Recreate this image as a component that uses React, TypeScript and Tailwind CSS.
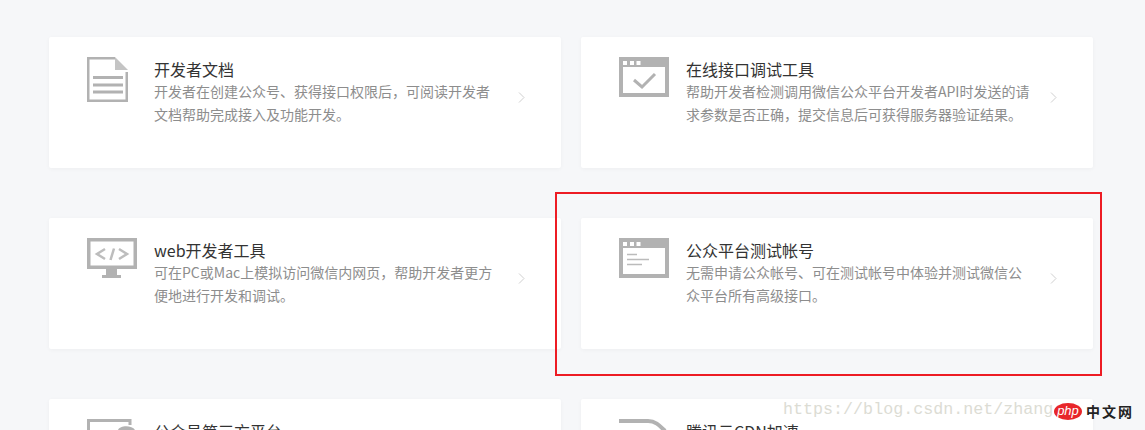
import React from 'react';

const DocIcon = () => (
  <svg width="41" height="45" viewBox="0 0 41 45" className="block">
    <path d="M0 0H28V2.500H2.500V42.500H38.500V15H41V45H0Z" fill="#b2b2b2" />
    <path d="M28 0L41 13H28Z" fill="#c4c4c4" />
    <path d="M6 19H36V22H6ZM6 26.500H36V29.500H6ZM6 33.500H36V36.500H6Z" fill="#b2b2b2" />
  </svg>
);

const WindowFrame = ({ children }: { children: React.ReactNode }) => (
  <svg width="50" height="40" viewBox="0 0 50 40" className="block">
    <path fillRule="evenodd" d="M0 0H50V40H0ZM4 10V36H46V10Z" fill="#b2b2b2" />
    <rect x="4" y="4" width="4" height="4" fill="#fff" />
    <rect x="11" y="4" width="4" height="4" fill="#fff" />
    <rect x="17.500" y="4" width="4" height="4" fill="#fff" />
    {children}
  </svg>
);

const CheckWindowIcon = () => (
  <WindowFrame>
    <path d="M15 23L23 30L36 17" fill="none" stroke="#b2b2b2" strokeWidth="3" />
  </WindowFrame>
);

const TextWindowIcon = () => (
  <WindowFrame>
    <path d="M8 16.500H18M8 21.500H30M8 26.500H23" fill="none" stroke="#bbbbbb" strokeWidth="1.500" />
  </WindowFrame>
);

const MonitorIcon = () => (
  <svg width="50" height="41" viewBox="0 0 50 41" className="block">
    <path fillRule="evenodd" d="M0 0H50V31H0ZM3.500 3.500V27.500H46.500V3.500Z" fill="#b2b2b2" />
    <path d="M19 31H30V37H19ZM15 37H34V40H15Z" fill="#b2b2b2" />
    <path d="M18 11L10 16L18 21M32 11L40 16L32 21M27 10.500L23.500 22" fill="none" stroke="#bdbdbd" strokeWidth="2.500" />
  </svg>
);

const PlatformIcon = () => (
  <svg width="48" height="11" viewBox="0 0 48 11" className="block">
    <path d="M1.500 11V1.500H43V6" fill="none" stroke="#b2b2b2" strokeWidth="3" />
    <path d="M31 11C33 6 45 6 48 11Z" fill="#b2b2b2" />
  </svg>
);

const CloudIcon = () => (
  <svg width="48" height="12" viewBox="0 0 48 12" className="block">
    <path d="M0 2H29C37 2 41 7 46 12" fill="none" stroke="#b2b2b2" strokeWidth="4" />
  </svg>
);

const Chevron = () => (
  <svg width="7" height="11" viewBox="0 0 7 11" className="block mt-[35px] ml-[18px] shrink-0">
    <path d="M1 0.500L6 5.500L1 10.500" fill="none" stroke="#cfcfcf" strokeWidth="1" />
  </svg>
);

interface CardProps {
  icon: React.ReactNode;
  title: string;
  desc?: string;
}

const Card = ({ icon, title, desc }: CardProps) => (
  <div className="h-[131px] bg-white rounded-[2px] shadow-[0_1px_4px_rgba(0,0,0,0.04)] pl-[38px] pt-5 flex">
    <div className="w-[67px] shrink-0">{icon}</div>
    <div className="w-[346px] shrink-0">
      <h3 className="text-base leading-[24px] font-normal text-[#333]">{title}</h3>
      {desc && <p className="text-sm leading-[23px] text-[#8d8d8d] -mt-[1px]">{desc}</p>}
    </div>
    {desc && <Chevron />}
  </div>
);

export default function App() {
  return (
    <div
      className="relative h-[430px] w-[1145px] overflow-hidden bg-[#f6f7f9] pt-[37px] pl-[49px]"
      style={{ fontFamily: '"Noto Sans CJK SC", "Noto Sans", sans-serif' }}
    >
      <div className="grid grid-cols-[512px_512px] gap-x-5 gap-y-[50px]">
        <Card
          icon={<DocIcon />}
          title="开发者文档"
          desc="开发者在创建公众号、获得接口权限后，可阅读开发者文档帮助完成接入及功能开发。"
        />
        <Card
          icon={<CheckWindowIcon />}
          title="在线接口调试工具"
          desc="帮助开发者检测调用微信公众平台开发者API时发送的请求参数是否正确，提交信息后可获得服务器验证结果。"
        />
        <Card
          icon={<MonitorIcon />}
          title="web开发者工具"
          desc="可在PC或Mac上模拟访问微信内网页，帮助开发者更方便地进行开发和调试。"
        />
        <Card
          icon={<TextWindowIcon />}
          title="公众平台测试帐号"
          desc="无需申请公众帐号、可在测试帐号中体验并测试微信公众平台所有高级接口。"
        />
        <Card icon={<PlatformIcon />} title="公众号第三方平台" />
        <Card icon={<CloudIcon />} title="腾讯云CDN加速" />
      </div>

      {/* red annotation box drawn over the screenshot */}
      <div className="absolute left-[555px] top-[192px] w-[547px] h-[184px] border-2 border-[#ed1c24]" />

      {/* watermark */}
      <div
        className="absolute left-[783px] top-[399px] text-[16.700px] leading-[22px] text-[#dcdcd4] whitespace-nowrap"
        style={{ fontFamily: '"Liberation Mono", monospace' }}
      >
        https://blog.csdn.net/zhang
      </div>
      <div className="absolute left-[1054px] top-[403px] flex items-center">
        <div
          className="w-[28px] h-[17px] rounded-[50%] bg-[#e8262a] text-white text-[13px] leading-[15px] italic text-center"
          style={{ fontFamily: '"Liberation Sans", sans-serif' }}
        >
          php
        </div>
        <div className="ml-[4px] text-[14px] leading-[17px] tracking-[2px] font-bold text-[#222]">中文网</div>
      </div>
    </div>
  );
}
